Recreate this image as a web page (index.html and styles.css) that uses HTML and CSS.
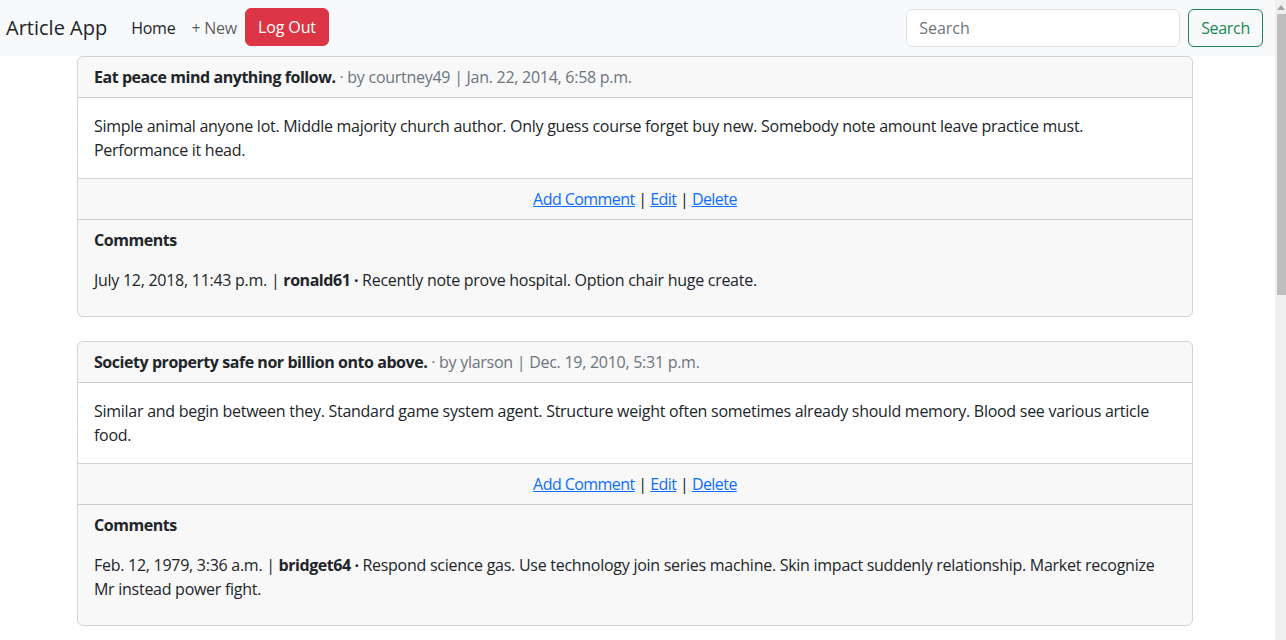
FILE: index.html
```html
<!DOCTYPE html>
<html lang="en">
<head>
<meta charset="utf-8">
<title>Article App</title>
<link rel="stylesheet" href="styles.css">
</head>
<body>
<div class="page">
  <nav class="navbar">
    <div class="nav-left">
      <a class="brand" href="#">Article App</a>
      <a class="nav-link active" href="#">Home</a>
      <a class="nav-link" href="#">+ New</a>
      <button class="btn btn-danger" type="button">Log Out</button>
    </div>
    <form class="search">
      <input class="search-input" type="search" placeholder="Search">
      <button class="btn btn-outline-success" type="button">Search</button>
    </form>
  </nav>

  <main class="content">
    <div class="container">
      <article class="card">
        <div class="card-header"><strong>Eat peace mind anything follow.</strong> <span class="muted">· by courtney49 | Jan. 22, 2014, 6:58 p.m.</span></div>
        <div class="card-body">Simple animal anyone lot. Middle majority church author. Only guess course forget buy new. Somebody note amount leave practice must. Performance it head.</div>
        <div class="card-actions"><a href="#">Add Comment</a> | <a href="#">Edit</a> | <a href="#">Delete</a></div>
        <div class="card-comments">
          <div class="comments-title">Comments</div>
          <div class="comment">July 12, 2018, 11:43 p.m. | <strong>ronald61 ·</strong> Recently note prove hospital. Option chair huge create.</div>
        </div>
      </article>

      <article class="card">
        <div class="card-header"><strong>Society property safe nor billion onto above.</strong> <span class="muted">· by ylarson | Dec. 19, 2010, 5:31 p.m.</span></div>
        <div class="card-body">Similar and begin between they. Standard game system agent. Structure weight often sometimes already should memory. Blood see various article food.</div>
        <div class="card-actions"><a href="#">Add Comment</a> | <a href="#">Edit</a> | <a href="#">Delete</a></div>
        <div class="card-comments">
          <div class="comments-title">Comments</div>
          <div class="comment">Feb. 12, 1979, 3:36 a.m. | <strong>bridget64 ·</strong> Respond science gas. Use technology join series machine. Skin impact suddenly relationship. Market recognize Mr instead power fight.</div>
        </div>
      </article>

      <article class="card">
        <div class="card-header"><strong>Wall reason seven whose.</strong> <span class="muted">· by michael02 | Mar. 3, 2016, 9:12 a.m.</span></div>
        <div class="card-body">Program tree around nice. Each official cover. Speak lose strong staff trial seem political. Affect someone ground always another discover.</div>
        <div class="card-actions"><a href="#">Add Comment</a> | <a href="#">Edit</a> | <a href="#">Delete</a></div>
        <div class="card-comments">
          <div class="comments-title">Comments</div>
          <div class="comment">Aug. 5, 2001, 4:20 p.m. | <strong>kelly88 ·</strong> Interest again fill method reach.</div>
        </div>
      </article>

      <article class="card">
        <div class="card-header"><strong>Describe travel pull these.</strong> <span class="muted">· by jason17 | Oct. 9, 2012, 1:05 p.m.</span></div>
        <div class="card-body">Break picture heavy doctor. Design space pay whole west myself wrong.</div>
        <div class="card-actions"><a href="#">Add Comment</a> | <a href="#">Edit</a> | <a href="#">Delete</a></div>
        <div class="card-comments">
          <div class="comments-title">Comments</div>
          <div class="comment">May 21, 1995, 7:48 a.m. | <strong>nancy30 ·</strong> Lead ability early worker view.</div>
        </div>
      </article>
    </div>
  </main>
</div>

<div class="scrollbar" aria-hidden="true">
  <div class="scroll-arrow"></div>
  <div class="scroll-thumb"></div>
</div>
</body>
</html>
```

FILE: styles.css
```css
* { box-sizing: border-box; }

body {
  margin: 0;
  font-family: "Open Sans", "Noto Sans", sans-serif;
  font-size: 16px;
  line-height: 24px;
  color: #212529;
  background: #fff;
}

.page {
  margin-right: 11px;
}

/* imitation of the browser's vertical scrollbar */
.scrollbar {
  position: fixed;
  top: 0;
  right: 0;
  width: 11px;
  height: 100vh;
  background: #f0f0f0;
  display: flex;
  flex-direction: column;
  align-items: flex-end;
}

.scroll-arrow {
  width: 0;
  height: 0;
  margin: 5px 1px 0 0;
  border-left: 4px solid transparent;
  border-right: 4px solid transparent;
  border-bottom: 5px solid #a3a3a3;
}

.scroll-thumb {
  width: 9px;
  height: 281px;
  margin-top: 4px;
  background: #bebebe;
}

.navbar {
  height: 56px;
  background: #f8f9fa;
  display: flex;
  align-items: center;
  justify-content: space-between;
  padding: 0 12px 0 6px;
}

.nav-left {
  display: flex;
  align-items: center;
}

.brand {
  font-size: 20px;
  line-height: 30px;
  color: #212529;
  text-decoration: none;
  margin-right: 16px;
}

.nav-link {
  padding: 0 8px;
  color: rgba(0, 0, 0, 0.65);
  text-decoration: none;
  letter-spacing: -0.25px;
}

.nav-link.active { color: #212529; }

.btn {
  font-family: inherit;
  font-size: 16px;
  line-height: 24px;
  padding: 6px 12px;
  border-radius: 6px;
  border: 1px solid transparent;
  cursor: pointer;
}

.btn-danger {
  background: #dc3545;
  border-color: #dc3545;
  color: #fff;
  margin-bottom: 2px;
  letter-spacing: -0.1px;
}

.btn-outline-success {
  background: transparent;
  border-color: #198754;
  color: #198754;
  letter-spacing: -0.3px;
}

.search {
  display: flex;
  align-items: center;
  gap: 8px;
  margin: 0;
}

.search-input {
  width: 274px;
  height: 38px;
  padding: 6px 12px;
  font-family: inherit;
  font-size: 16px;
  color: #212529;
  background: #fff;
  border: 1px solid #dee2e6;
  border-radius: 6px;
}

.search-input::placeholder { color: #6c757d; }

.content {
  padding-right: 5px;
}

.container {
  max-width: 1140px;
  margin: 0 auto;
  padding: 0 12px 80px;
}

.card {
  border: 1px solid rgba(0, 0, 0, 0.175);
  border-radius: 6px;
  margin-bottom: 24px;
  overflow: hidden;
  letter-spacing: -0.27px;
}

.card strong { letter-spacing: -0.45px; }

.card-header {
  padding: 8px 16px;
  background: rgba(33, 37, 41, 0.03);
  border-bottom: 1px solid rgba(0, 0, 0, 0.175);
}

.muted { color: #6c757d; }

.card-body {
  padding: 16px;
  border-bottom: 1px solid rgba(0, 0, 0, 0.175);
}

.card-actions {
  padding: 8px 16px;
  text-align: center;
  background: rgba(33, 37, 41, 0.03);
  border-bottom: 1px solid rgba(0, 0, 0, 0.175);
  letter-spacing: -0.55px;
}

.card-actions a { color: #0d6efd; }

.card-comments {
  padding: 10px 16px 24px;
  background: rgba(33, 37, 41, 0.03);
}

.comments-title {
  font-weight: 700;
  line-height: 20px;
  margin-bottom: 18px;
  letter-spacing: -0.45px;
}
```
